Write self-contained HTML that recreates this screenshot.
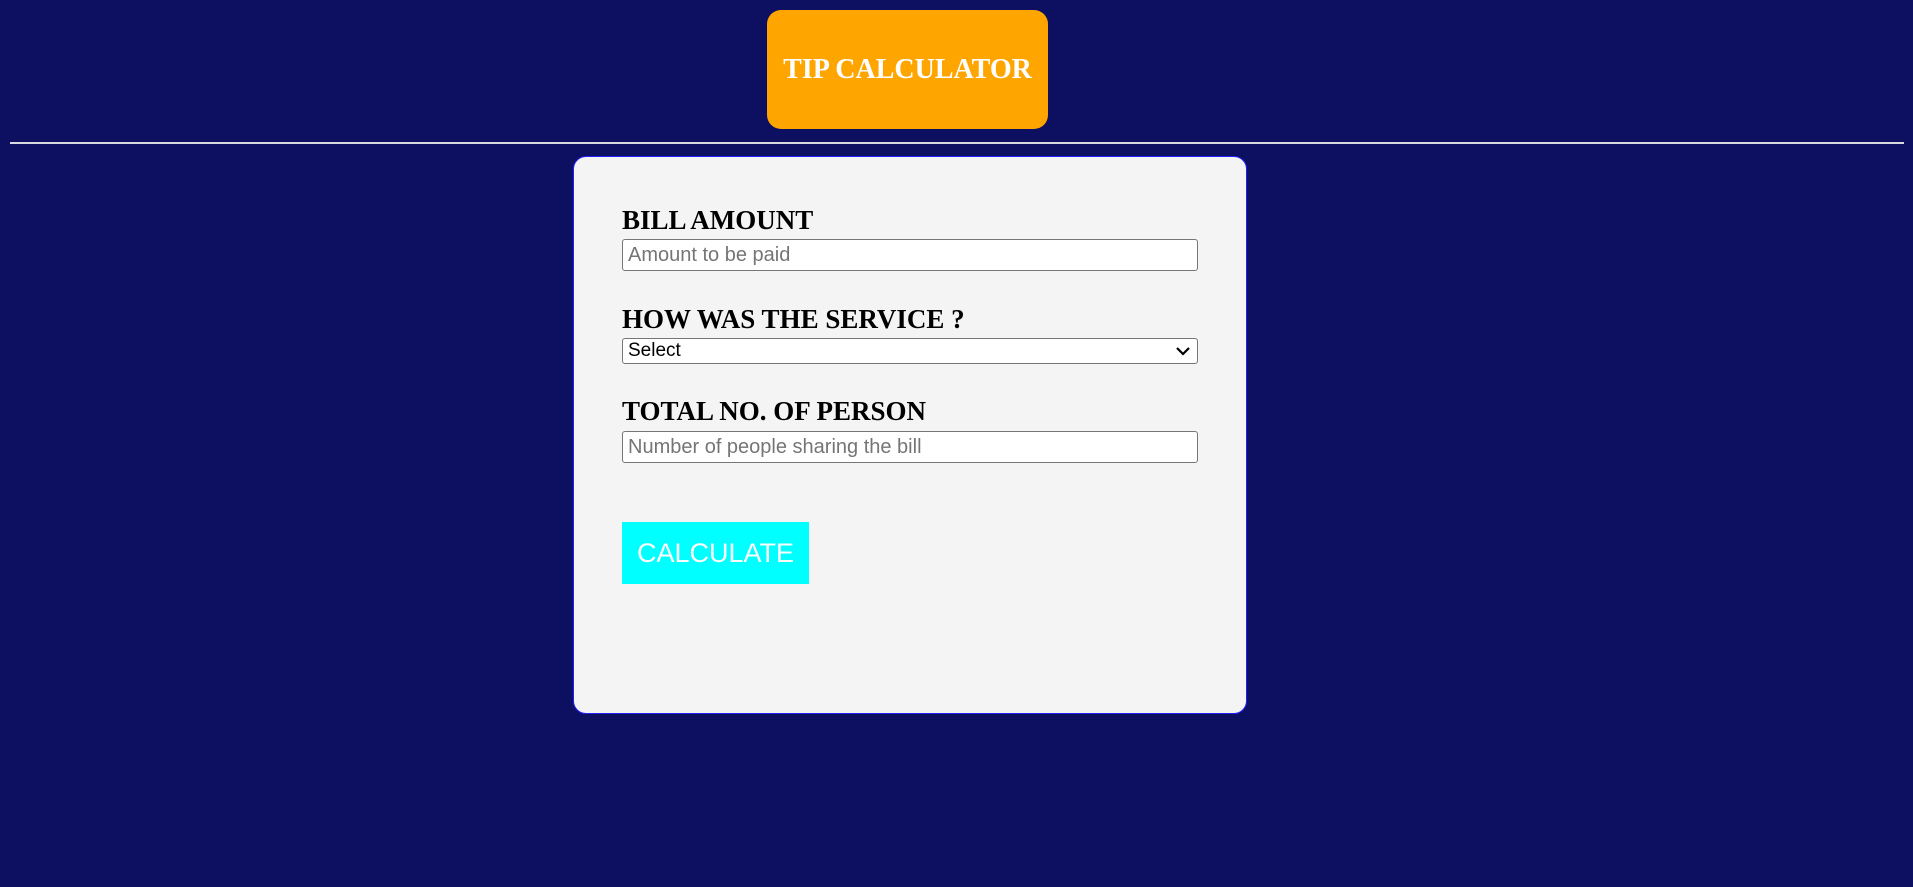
<!DOCTYPE html>
<html><head><style>
body{margin:0;width:1913px;height:887px;background:#0d0f61;position:relative;overflow:hidden;font-family:"Liberation Serif",serif}
.hd{position:absolute;left:767px;top:10px;width:281px;height:119px;background:#ffa500;border-radius:14px;color:#fff;font-weight:bold;font-size:28px;display:flex;align-items:center;justify-content:center}
.hr{position:absolute;left:10px;top:142px;width:1894px;height:2px;background:#d8d8e0}
.card{position:absolute;left:573px;top:156px;width:672px;height:556px;background:#f4f4f4;border:1px solid #2020ff;border-radius:13px}
.lb{position:absolute;left:622px;font-weight:bold;font-size:27px;color:#000;line-height:1}
.in{position:absolute;left:622px;width:576px;background:#fff;border:1px solid #767676;border-radius:3px;font-family:"Liberation Sans",sans-serif;font-size:20px;color:#757575;box-sizing:border-box;padding-left:5px;display:flex;align-items:center}
.btn{position:absolute;left:622px;top:522px;width:187px;height:62px;background:#00ffff;color:#fff;font-family:"Liberation Sans",sans-serif;font-size:27px;display:flex;align-items:center;justify-content:center}
</style></head><body>
<div class="hd">TIP CALCULATOR</div>
<div class="hr"></div>
<div class="card"></div>
<div class="lb" style="top:207px">BILL AMOUNT</div>
<div class="in" style="top:239px;height:32px">Amount to be paid</div>
<div class="lb" style="top:306px">HOW WAS THE SERVICE ?</div>
<div class="in" style="top:338px;height:26px;color:#000;font-size:19px">Select
<svg style="position:absolute;right:6px;top:7px" width="16" height="11" viewBox="0 0 16 11"><path d="M2 2l6 6 6-6" stroke="#000" stroke-width="2.2" fill="none"/></svg></div>
<div class="lb" style="top:398px">TOTAL NO. OF PERSON</div>
<div class="in" style="top:431px;height:32px">Number of people sharing the bill</div>
<div class="btn">CALCULATE</div>
</body></html>
